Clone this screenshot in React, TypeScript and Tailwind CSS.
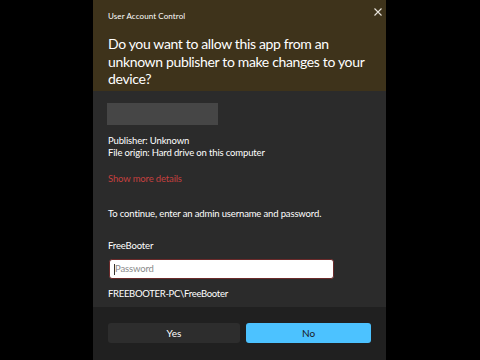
import React from "react";

export default function App() {
  const font = { fontFamily: 'Lato, "Noto Sans", sans-serif' };
  return (
    <div className="w-[480px] h-[360px] bg-black overflow-hidden" style={font}>
      <div className="ml-[93px] w-[293px] h-[360px] flex flex-col">
        <div className="relative h-[91px] bg-[#3e331b] px-[15px] pt-[10px]">
          <div className="text-[8px] leading-[13px] text-white tracking-[0.1px]">User Account Control</div>
          <div className="mt-[12px] text-[14px] leading-[17.5px] text-white tracking-[-0.35px]">
            Do you want to allow this app from an unknown publisher to make changes to your device?
          </div>
          <svg className="absolute left-[281px] top-[8px]" width="8" height="8" viewBox="0 0 8 8">
            <path d="M0.5 0.5L7.5 7.5M7.5 0.5L0.5 7.5" stroke="#e8e4dc" strokeWidth="1.1" />
          </svg>
        </div>
        <div className="h-[216px] bg-[#2b2b2b] px-[15px] pt-[12px] text-white text-[9.5px] tracking-[-0.15px]">
          <div className="ml-[-1px] w-[111px] h-[22px] bg-[#464646]" />
          <div className="mt-[10px] leading-[12px]">Publisher: Unknown</div>
          <div className="leading-[12px]">File origin: Hard drive on this computer</div>
          <div className="mt-[14px] leading-[12px] text-[#c4403f]">Show more details</div>
          <div className="mt-[23px] leading-[12px]">To continue, enter an admin username and password.</div>
          <div className="mt-[20px] leading-[12px]">FreeBooter</div>
          <div className="mt-[7px] ml-[1px] w-[225px] h-[20px] bg-white border border-[#6b2a2a] rounded-[3px] flex items-center pl-[4px]">
            <div className="w-[1px] h-[11px] bg-[#333]" />
            <span className="text-[#8a8a8a]">Password</span>
          </div>
          <div className="mt-[9px] leading-[12px] tracking-[-0.3px]">FREEBOOTER-PC\FreeBooter</div>
        </div>
        <div className="flex-1 bg-[#202020] px-[15px] pt-[16px]">
          <div className="flex gap-[6px]">
            <div className="w-[133px] h-[20px] bg-[#2d2d2d] rounded-[3px] flex items-center justify-center text-[10px] text-white">Yes</div>
            <div className="w-[126px] h-[20px] bg-[#4cc2ff] rounded-[3px] flex items-center justify-center text-[10px] text-[#1a1a1a]">No</div>
          </div>
        </div>
      </div>
    </div>
  );
}
